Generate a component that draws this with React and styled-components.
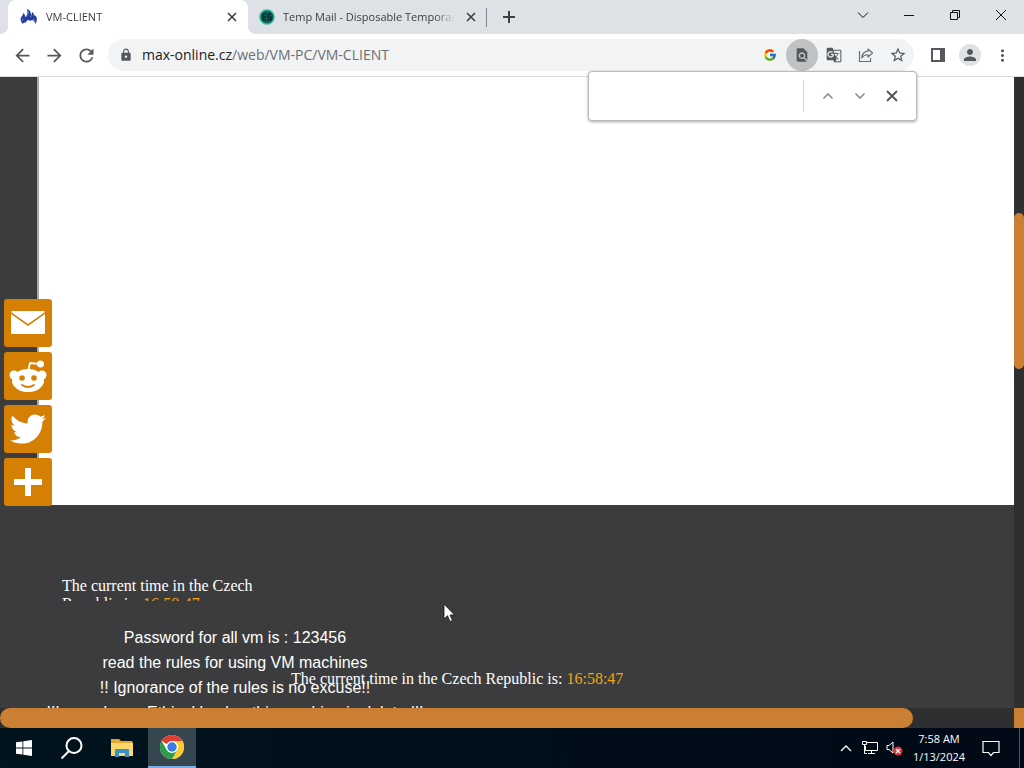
import React from "react";
import styled, { createGlobalStyle, css } from "styled-components";
import {
  MdArrowBack,
  MdArrowForward,
  MdRefresh,
  MdLock,
  MdFindInPage,
  MdGTranslate,
  MdStarBorder,
  MdMoreVert,
  MdPerson,
} from "react-icons/md";
import { FaTwitter } from "react-icons/fa";
import { FcGoogle } from "react-icons/fc";

const GlobalStyle = createGlobalStyle`
  *, *::before, *::after { box-sizing: border-box; }
  body { margin: 0; overflow: hidden; }
  button { border: 0; padding: 0; margin: 0; background: none; font: inherit; color: inherit; }
  svg { display: block; flex: none; }
`;

const uiFont = `"Open Sans", "Noto Sans", sans-serif`;

const Desktop = styled.div`
  display: flex;
  flex-direction: column;
  height: 100vh;
  font-family: ${uiFont};
  font-size: 11px;
  color: #3c4043;
  background: #3c3c3e;
`;

/* ---------- tab strip ---------- */

const TabStrip = styled.header`
  display: flex;
  flex: none;
  height: 34px;
  padding-left: 8px;
  background: #dee1e6;
`;

const Tab = styled.div`
  position: relative;
  display: flex;
  align-items: center;
  gap: 8px;
  width: ${(p) => (p.$active ? 240 : 238)}px;
  padding: 0 ${(p) => (p.$active ? 8 : 7)}px 0 ${(p) => (p.$active ? 12 : 11)}px;
  margin-right: ${(p) => (p.$active ? 0 : 7)}px;
  border-radius: 8px 8px 0 0;
  ${(p) =>
    p.$active &&
    css`
      background: #fff;
      &::before,
      &::after {
        content: "";
        position: absolute;
        bottom: 0;
        width: 8px;
        height: 8px;
      }
      &::before {
        left: -8px;
        background: radial-gradient(circle at 0 0, #dee1e6 8px, #fff 8px);
      }
      &::after {
        right: -8px;
        background: radial-gradient(circle at 100% 0, #dee1e6 8px, #fff 8px);
      }
    `}
  ${(p) =>
    !p.$active &&
    css`
      &::after {
        content: "";
        position: absolute;
        right: -1px;
        top: 8px;
        width: 1px;
        height: 19px;
        background: #80868b;
      }
    `}
`;

const TabTitle = styled.span`
  flex: 1;
  min-width: 0;
  overflow: hidden;
  white-space: nowrap;
  line-height: 18px;
  mask-image: linear-gradient(to left, transparent, #000 20px);
`;

const SmallButton = styled.button`
  display: grid;
  place-items: center;
  flex: none;
  width: 16px;
  height: 16px;
`;

const NewTabButton = styled(SmallButton)`
  align-self: center;
  width: 32px;
  height: 32px;
`;

const WindowButtons = styled.div`
  display: flex;
  margin-left: auto;
`;

const WindowButton = styled.button`
  display: grid;
  place-items: center;
  width: 46px;
  height: 29px;
  color: #111;
`;

/* ---------- toolbar ---------- */

const Toolbar = styled.nav`
  position: relative;
  z-index: 2;
  display: flex;
  align-items: center;
  flex: none;
  height: 43px;
  padding: 0 6px;
  background: #fff;
  border-bottom: 1px solid #dadce0;
`;

const IconButton = styled.button`
  display: grid;
  place-items: center;
  flex: none;
  width: 32px;
  height: 32px;
  border-radius: 50%;
  color: #54585c;
  background: ${(p) => (p.$pressed ? "#bfc1c2" : "transparent")};
`;

const Omnibox = styled.div`
  display: flex;
  align-items: center;
  flex: 1;
  min-width: 0;
  height: 32px;
  margin: 0 8px 0 6px;
  padding-left: 11px;
  border-radius: 16px;
  background: #f1f3f4;
  color: #54585c;
`;

const Address = styled.a`
  flex: 1;
  min-width: 0;
  margin-left: 9px;
  overflow: hidden;
  white-space: nowrap;
  font-size: 14px;
  line-height: 20px;
  color: #6b6f74;
  text-decoration: none;
`;

const Host = styled.span`
  color: #202124;
`;

const Avatar = styled.span`
  display: grid;
  place-items: center;
  width: 22px;
  height: 22px;
  border-radius: 50%;
  background: #dee1e6;
`;

const FindBar = styled.form`
  position: absolute;
  right: 107px;
  top: 37px;
  display: flex;
  align-items: center;
  gap: 8px;
  width: 329px;
  height: 50px;
  padding: 0 12px 0 16px;
  border: 1px solid #b9bbbd;
  border-radius: 4px;
  background: #fff;
  box-shadow: 0 1px 3px rgba(0, 0, 0, 0.35);
  color: #8a8d91;
`;

const FindInput = styled.input`
  flex: 1;
  min-width: 0;
  height: 32px;
  margin-right: 4px;
  border: 0;
  border-right: 1px solid #d0d2d5;
  outline: 0;
  background: none;
  font: 13px ${uiFont};
`;

const FindButton = styled(SmallButton)`
  width: 24px;
  height: 24px;
  color: ${(p) => (p.$strong ? "#55585c" : "inherit")};
`;

/* ---------- web page ---------- */

const Viewport = styled.div`
  position: relative;
  display: grid;
  grid-template-columns: 1fr 10px;
  grid-template-rows: 1fr 20px;
  flex: 1;
  min-height: 0;
`;

const Page = styled.main`
  display: flex;
  flex-direction: column;
  min-width: 0;
  min-height: 0;
  overflow: hidden;
  background: #3c3c3e;
  color: #fff;
`;

const Sheet = styled.section`
  flex: 1;
  margin-left: 37px;
  border-left: 2px solid #a9a9aa;
  background: #fff;
`;

const PageFooter = styled.footer`
  position: relative;
  flex: none;
  height: 203px;
  padding-top: 72px;
  overflow: hidden;
`;

const Clock = styled.p`
  width: 200px;
  height: 24px;
  margin: 0 0 24px 62px;
  overflow: hidden;
  font: 16px/18px "Liberation Serif", serif;
`;

const FloatingClock = styled(Clock)`
  position: absolute;
  left: 291px;
  top: 165px;
  width: auto;
  margin: 0;
`;

const Time = styled.time`
  color: #f5a40c;
`;

const Notice = styled.div`
  width: 400px;
  margin-left: 35px;
  text-align: center;
  white-space: nowrap;
  font: 16px/25px "Liberation Sans", sans-serif;
`;

const NoticeLine = styled.p`
  margin: 0;
`;

const ShareBar = styled.aside`
  position: absolute;
  left: 4px;
  top: 222px;
  display: flex;
  flex-direction: column;
  gap: 5px;
`;

const ShareLink = styled.a`
  display: grid;
  place-items: center;
  width: 48px;
  height: 48px;
  border-radius: 3px;
  background: #d67f05;
  color: #fff;
`;

const ScrollTrack = styled.div`
  background: #2f2f31;
  padding-top: ${(p) => (p.$vertical ? 136 : 0)}px;
`;

const ScrollThumb = styled.div`
  width: ${(p) => (p.$vertical ? "100%" : "90%")};
  height: ${(p) => (p.$vertical ? "156px" : "100%")};
  border-radius: 10px;
  background: #cb7f35;
`;

const ScrollCorner = styled.div`
  background: #cb7f35;
`;

/* ---------- taskbar ---------- */

const Taskbar = styled.footer`
  display: flex;
  flex: none;
  height: 40px;
  background: linear-gradient(to right, #00141e, #010916);
  color: #fff;
`;

const TaskButton = styled.button`
  display: grid;
  place-items: center;
  width: 48px;
  height: 40px;
  margin-left: ${(p) => (p.$app ? 2 : 0)}px;
  background: ${(p) => (p.$running ? "#35464f" : "transparent")};
  border-bottom: ${(p) => (p.$running ? "2px solid #76b0e6" : "0")};
`;

const Tray = styled.div`
  display: flex;
  align-items: center;
  margin-left: auto;
  padding-right: 9px;
`;

const TrayButton = styled.button`
  display: grid;
  place-items: center;
  width: 24px;
  height: 40px;
`;

const TrayClock = styled.button`
  width: 66px;
  line-height: 18px;
  text-align: center;
  white-space: nowrap;
`;

const ActionCenter = styled(TrayButton)`
  width: 38px;
`;

const ShowDesktop = styled.button`
  width: 5px;
  height: 40px;
  border-left: 1px solid #4b5563;
`;

const Pointer = styled.svg`
  position: fixed;
  left: 443px;
  top: 603px;
  z-index: 5;
`;

/* ---------- drawings ---------- */

const FlameIcon = () => (
  <svg width="18" height="16" viewBox="0 0 18 16">
    <path
      d="M3 15C0 12 0 9 2 7c1-1 1-2 1-3 2 1 2 2 2 4 2-1 3-4 2-8 3 1 4 3 4 6 1-1 1-2 1-3 2 1 2 3 2 4l1-1c3 3 2 7 0 9 0-3-2-4-3-4-1 0-1 1-2 1-1-2-4-1-4 2-1-1-3 0-3 1z"
      fill="#243c9e"
    />
    <path d="M8 2c1 2 0 4-2 6M3 9c-1 1-1 2 0 3m7-4c1-1 2-1 2-2m1 4c1 0 2 1 2 2" stroke="#6f8fdc" fill="none" />
  </svg>
);

const TempMailIcon = () => (
  <svg width="16" height="16" viewBox="0 0 16 16">
    <circle cx="8" cy="8" r="7" fill="#12594f" stroke="#24b89a" strokeWidth="1.5" />
    <path d="M7 5H5Q4 5 4 6v4q0 1 1 1h2M4 8h3M12 5h-2Q9 5 9 6v4q0 1 1 1h2V8h-2" fill="none" stroke="#0a2c38" strokeWidth="1.3" />
  </svg>
);

const Line = ({ d, w = 1, size = 12, ...rest }) => (
  <svg width={size} height={size} viewBox={`0 0 ${size} ${size}`} fill="none" stroke="currentColor" strokeWidth={w} {...rest}>
    <path d={d} />
  </svg>
);

const ShareIcon = () => (
  <svg width="16" height="16" viewBox="0 0 16 16" fill="none" stroke="#6a6e72" strokeWidth="1.2">
    <path d="M1.500 4v10.500h11V11" />
    <path d="M10 2l4.500 4L10 10V7.800C7 7.500 5 9 3.800 11c.3-4 2.700-6.500 6.200-6.800z" strokeLinejoin="round" />
  </svg>
);

const SidePanelIcon = () => (
  <svg width="14" height="14" viewBox="0 0 14 14">
    <path d="M1 1h12v12H1z" fill="none" stroke="#55595d" strokeWidth="2" />
    <path d="M9 1h4v12H9z" fill="#55595d" />
  </svg>
);

const MailIcon = () => (
  <svg width="34" height="24" viewBox="0 0 34 24">
    <path d="M0 3l17 12L34 3v19q0 1-1 1H1q-1 0-1-1zM1 0h32l1 1-17 12L0 1z" fill="#fff" />
  </svg>
);

const RedditIcon = () => (
  <svg width="38" height="34" viewBox="0 0 38 34">
    <path d="M19 13l2-9 10 1" fill="none" stroke="#fff" strokeWidth="1.800" />
    <circle cx="31.500" cy="5" r="3.500" fill="#fff" />
    <circle cx="5" cy="16" r="4.500" fill="#fff" />
    <circle cx="33" cy="16" r="4.500" fill="#fff" />
    <ellipse cx="19" cy="21.500" rx="16" ry="11.500" fill="#fff" />
    <circle cx="13" cy="19" r="2.800" fill="#d67f05" />
    <circle cx="25" cy="19" r="2.800" fill="#d67f05" />
    <path d="M13 26q6 4 12 0" fill="none" stroke="#d67f05" strokeWidth="1.800" strokeLinecap="round" />
  </svg>
);

const WindowsIcon = () => (
  <svg width="16" height="16" viewBox="0 0 16 16" fill="#fff">
    <path d="M0 2.300l6.500-.9v6.200H0zM7.300 1.300L16 0v7.600H7.300zM0 8.400h6.500v6.200L0 13.700zM7.300 8.400H16V16l-8.700-1.300z" />
  </svg>
);

const SearchIcon = () => (
  <svg width="24" height="24" viewBox="0 0 24 24" fill="none" stroke="#fff" strokeWidth="2">
    <circle cx="14" cy="9.500" r="7.500" />
    <path d="M9 15l-7.500 7.500" />
  </svg>
);

const FolderIcon = () => (
  <svg width="22" height="18" viewBox="0 0 22 18">
    <path d="M0 0h8l2 2h11.500v15H0z" fill="#e2a92f" />
    <path d="M0 4h22v13H0z" fill="#fbd66c" />
    <path d="M4 10h14v8h-4v-4H8v4H4z" fill="#3c91c2" />
  </svg>
);

const ChromeIcon = () => (
  <svg width="24" height="24" viewBox="0 0 24 24">
    <circle cx="12" cy="12" r="12" fill="#fff" />
    <path d="M12 12L1.600 6A12 12 0 0 1 22.400 6z" fill="#df3d32" />
    <path d="M12 6h10.400A12 12 0 0 1 12 24l5.200-9z" fill="#fbcb2f" />
    <path d="M1.600 6A12 12 0 0 0 12 24l5.200-9H6.800z" fill="#2c9c4b" />
    <circle cx="12" cy="12" r="6" fill="#fff" />
    <circle cx="12" cy="12" r="4.700" fill="#3b7de6" />
  </svg>
);

const NetworkIcon = () => (
  <svg width="16" height="14" viewBox="0 0 16 14" fill="none" stroke="#fff">
    <path d="M5 1.500h10.500v8H3.500V5M9.500 9.500v3M6 12.500h7M.5.500h4v3h-4zM2.500 4v8.500H5" />
  </svg>
);

const VolumeIcon = () => (
  <svg width="18" height="16" viewBox="0 0 18 16">
    <path d="M2 5.500h2l4-3.500v11L4 9.500H2z" fill="none" stroke="#fff" />
    <circle cx="13" cy="11" r="4.500" fill="#d13438" />
    <path d="M11 9l4 4M15 9l-4 4" stroke="#fff" strokeWidth="1.200" />
  </svg>
);

const ActionIcon = () => (
  <svg width="18" height="17" viewBox="0 0 18 17" fill="none" stroke="#fff" strokeWidth="1.200">
    <path d="M1 1.500h16v11h-5.500L9 15.500l-2.500-3H1z" />
  </svg>
);

const ClockText = () => (
  <>
    The current time in the Czech Republic is: <Time>16:58:47</Time>
  </>
);

const notices = [
  "Password for all vm is : 123456",
  "read the rules for using VM machines",
  "!! Ignorance of the rules is no excuse!!",
  "!!In use by an Ethical hacker this machine is deleted!!",
];

export default function App() {
  return (
    <Desktop>
      <GlobalStyle />
      <TabStrip>
        <Tab $active>
          <FlameIcon />
          <TabTitle>VM-CLIENT</TabTitle>
          <SmallButton aria-label="Close tab"><Line d="M2 2l8 8M10 2l-8 8" w={1.6} /></SmallButton>
        </Tab>
        <Tab>
          <TempMailIcon />
          <TabTitle>Temp Mail - Disposable Temporary Email</TabTitle>
          <SmallButton aria-label="Close tab"><Line d="M2 2l8 8M10 2l-8 8" w={1.6} /></SmallButton>
        </Tab>
        <NewTabButton aria-label="New tab"><Line d="M6 0v12M0 6h12" w={2} /></NewTabButton>
        <WindowButtons>
          <WindowButton aria-label="Search tabs"><Line d="M1 3.500l5 5 5-5" /></WindowButton>
          <WindowButton aria-label="Minimize"><Line d="M1 6.500h10" /></WindowButton>
          <WindowButton aria-label="Restore"><Line d="M1.500 3.500h7v7h-7zM3.500 3V1.500h7v7H9" /></WindowButton>
          <WindowButton aria-label="Close"><Line d="M1 1l10 10M11 1L1 11" /></WindowButton>
        </WindowButtons>
      </TabStrip>

      <Toolbar>
        <IconButton aria-label="Back"><MdArrowBack size={21} /></IconButton>
        <IconButton aria-label="Forward"><MdArrowForward size={21} /></IconButton>
        <IconButton aria-label="Reload"><MdRefresh size={21} /></IconButton>
        <Omnibox>
          <MdLock size={14} />
          <Address href="#"><Host>max-online.cz</Host>/web/VM-PC/VM-CLIENT</Address>
          <IconButton aria-label="Search with Google"><FcGoogle size={14} /></IconButton>
          <IconButton aria-label="Find in page" $pressed><MdFindInPage size={16} /></IconButton>
          <IconButton aria-label="Translate"><MdGTranslate size={16} /></IconButton>
          <IconButton aria-label="Share"><ShareIcon /></IconButton>
          <IconButton aria-label="Bookmark"><MdStarBorder size={18} /></IconButton>
        </Omnibox>
        <IconButton aria-label="Side panel"><SidePanelIcon /></IconButton>
        <IconButton aria-label="Profile"><Avatar><MdPerson size={18} /></Avatar></IconButton>
        <IconButton aria-label="Menu"><MdMoreVert size={19} /></IconButton>
        <FindBar>
          <FindInput aria-label="Find" />
          <FindButton type="button" aria-label="Previous"><Line d="M1.500 8.500L6 4l4.500 4.500" w={1.6} /></FindButton>
          <FindButton type="button" aria-label="Next"><Line d="M1.500 3.500L6 8l4.500-4.500" w={1.6} /></FindButton>
          <FindButton type="button" aria-label="Close" $strong><Line d="M1 1l10 10M11 1L1 11" w={2} /></FindButton>
        </FindBar>
      </Toolbar>

      <Viewport>
        <Page>
          <Sheet />
          <PageFooter>
            <Clock><ClockText /></Clock>
            <Notice>
              {notices.map((line) => <NoticeLine key={line}>{line}</NoticeLine>)}
            </Notice>
            <FloatingClock><ClockText /></FloatingClock>
          </PageFooter>
        </Page>
        <ScrollTrack $vertical><ScrollThumb $vertical /></ScrollTrack>
        <ScrollTrack><ScrollThumb /></ScrollTrack>
        <ScrollCorner />
        <ShareBar>
          <ShareLink href="#" aria-label="Email"><MailIcon /></ShareLink>
          <ShareLink href="#" aria-label="Reddit"><RedditIcon /></ShareLink>
          <ShareLink href="#" aria-label="Twitter"><FaTwitter size={36} /></ShareLink>
          <ShareLink href="#" aria-label="More"><Line size={28} w={6} d="M14 0v28M0 14h28" /></ShareLink>
        </ShareBar>
      </Viewport>

      <Taskbar>
        <TaskButton aria-label="Start"><WindowsIcon /></TaskButton>
        <TaskButton aria-label="Search"><SearchIcon /></TaskButton>
        <TaskButton aria-label="File Explorer" $app><FolderIcon /></TaskButton>
        <TaskButton aria-label="Chrome" $app $running><ChromeIcon /></TaskButton>
        <Tray>
          <TrayButton aria-label="Hidden icons"><Line d="M1 9l5-5 5 5" w={1.3} /></TrayButton>
          <TrayButton aria-label="Network"><NetworkIcon /></TrayButton>
          <TrayButton aria-label="Volume"><VolumeIcon /></TrayButton>
          <TrayClock>7:58 AM<br />1/13/2024</TrayClock>
          <ActionCenter aria-label="Notifications"><ActionIcon /></ActionCenter>
        </Tray>
        <ShowDesktop aria-label="Show desktop" />
      </Taskbar>

      <Pointer width="13" height="20" viewBox="0 0 13 20">
        <path d="M1 1v15l3.500-3.300L7 18.500l2.500-1L7 12h4.500z" fill="#fff" stroke="#111" strokeWidth="0.800" />
      </Pointer>
    </Desktop>
  );
}
